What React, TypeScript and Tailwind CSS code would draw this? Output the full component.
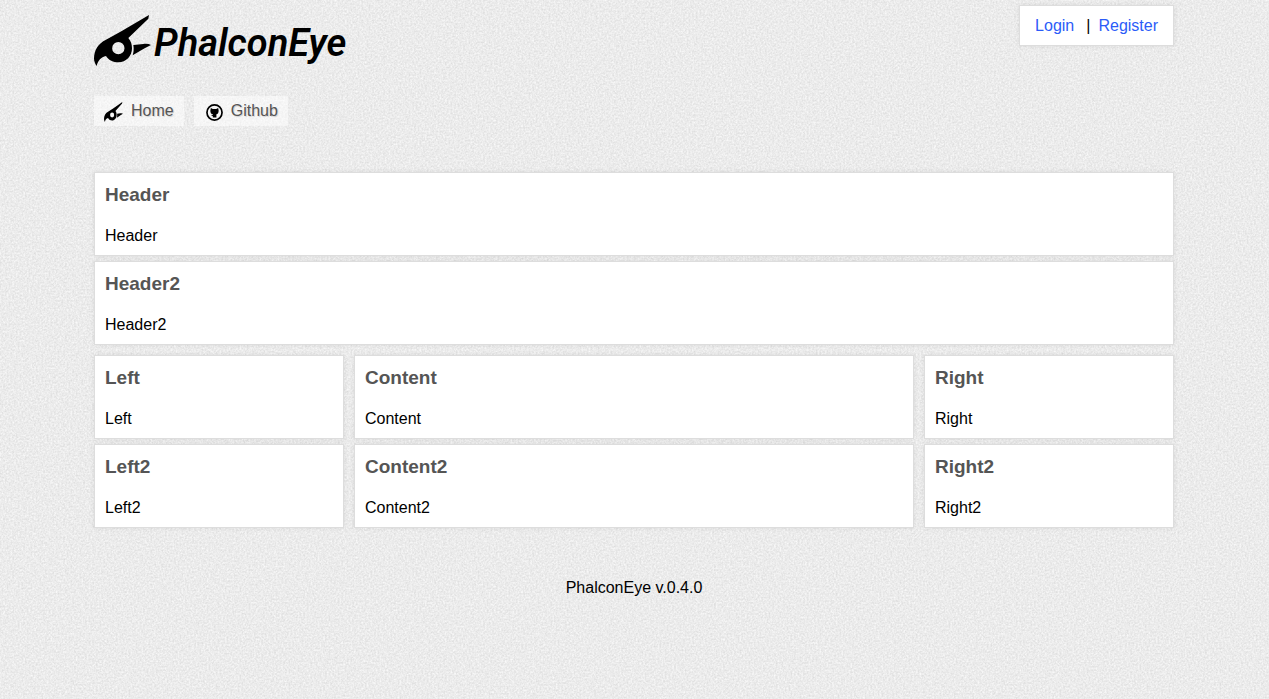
import React from "react";

function Bird({ className }: { className: string }) {
  return (
    <svg viewBox="30 30 171 153" preserveAspectRatio="none" className={className} fill="currentColor" aria-hidden="true">
      <path
        fillRule="evenodd"
        d="M195 30 L112 79 L66 104 C42 116 30 136 30 160 C30 169 33 176 38 183 C42 167 51 156 66 153 C74 166 88 172 103 172 C127 172 144 153 144 130 C144 117 140 107 133 99 L193 41 Z M103 111 a18 18 0 1 1 0 37 a18 18 0 1 1 0 -37 Z"
      />
      <path d="M148 120 L178 117 C187 115 194 116 201 120 L182 130 L146 151 C149 142 150 132 148 120 Z" />
    </svg>
  );
}

function OctocatMark({ className }: { className: string }) {
  return (
    <svg viewBox="0 0 16 16" className={className} aria-hidden="true">
      <circle cx="8" cy="8" r="7.1" fill="none" stroke="currentColor" strokeWidth="1.6" />
      <path
        fill="currentColor"
        d="M4.6 3.8 L6.4 4.7 H9.6 L11.4 3.8 L11.9 6 C12 8.2 11 9.4 9.8 9.7 V12.8 H6.4 V11.4 C5.6 11.5 5.2 10.8 4.7 10.2 C5.5 10.2 5.8 10.7 6.4 10.4 V9.7 C5 9.4 4 8.2 4.1 6 Z"
      />
    </svg>
  );
}

function PaperTexture() {
  return (
    <svg className="pointer-events-none absolute inset-0 -z-10 h-full w-full" aria-hidden="true">
      <filter id="paper" x="0" y="0" width="100%" height="100%" colorInterpolationFilters="sRGB">
        <feTurbulence type="fractalNoise" baseFrequency="0.55" numOctaves="3" seed="4" stitchTiles="stitch" />
        <feColorMatrix values="0.15 0 0 0 0.848  0.15 0 0 0 0.848  0.15 0 0 0 0.848  0 0 0 0 1" />
      </filter>
      <rect width="100%" height="100%" filter="url(#paper)" />
    </svg>
  );
}

function Block({ title }: { title: string }) {
  return (
    <section className="border border-[#dddddd] bg-white px-2.5 pt-2.5 pb-[7px] shadow-[0_0_5px_rgba(0,0,0,0.08)]">
      <h2 className="text-[19px] leading-6 font-bold text-[#555555]">{title}</h2>
      <p className="mt-[17px] leading-6">{title}</p>
    </section>
  );
}

function Column({ titles }: { titles: string[] }) {
  return (
    <div className="flex flex-col gap-[5px]">
      {titles.map((title) => (
        <Block key={title} title={title} />
      ))}
    </div>
  );
}

const navLink =
  "flex h-[30px] items-center bg-white/50 px-2.5 text-[#555555] [text-shadow:1px_1px_1px_rgba(0,0,0,0.15)]";

export default function App() {
  return (
    <div className="relative isolate min-h-screen bg-[#ebebeb] pr-px font-['Liberation_Sans',Arial,sans-serif] text-base text-black">
      <PaperTexture />
      <div className="mx-auto max-w-[1080px]">
        <header className="flex items-start justify-between pt-[5px]">
          <a href="#home" className="mt-2.5 flex items-start">
            <Bird className="h-[51px] w-[57px]" />
            <span className="ml-[3px] pt-2 font-['Roboto',sans-serif] text-[38px] leading-10 font-semibold italic">
              PhalconEye
            </span>
          </a>
          <div className="flex h-[41px] items-center border border-[#dddddd] bg-white px-[15px] text-[#2b5cf8] shadow-[0_0_5px_rgba(0,0,0,0.08)]">
            <a href="#login">Login</a>
            <span className="mr-2 ml-3 text-black">|</span>
            <a href="#register">Register</a>
          </div>
        </header>

        <nav className="mt-[30px] flex gap-2.5">
          <a href="#home" className={navLink}>
            <Bird className="mt-0.5 mr-2 h-5 w-[19px] text-black" />
            Home
          </a>
          <a href="#github" className={navLink}>
            <OctocatMark className="mt-0.5 mr-2 ml-0.5 h-[17px] w-[17px] text-black" />
            Github
          </a>
        </nav>

        <main className="mt-[46px] flex flex-col gap-2.5">
          <Column titles={["Header", "Header2"]} />
          <div className="grid grid-cols-[250px_1fr_250px] gap-2.5">
            <Column titles={["Left", "Left2"]} />
            <Column titles={["Content", "Content2"]} />
            <Column titles={["Right", "Right2"]} />
          </div>
        </main>

        <footer className="mt-12 pb-6 text-center leading-6">PhalconEye v.0.4.0</footer>
      </div>
    </div>
  );
}
